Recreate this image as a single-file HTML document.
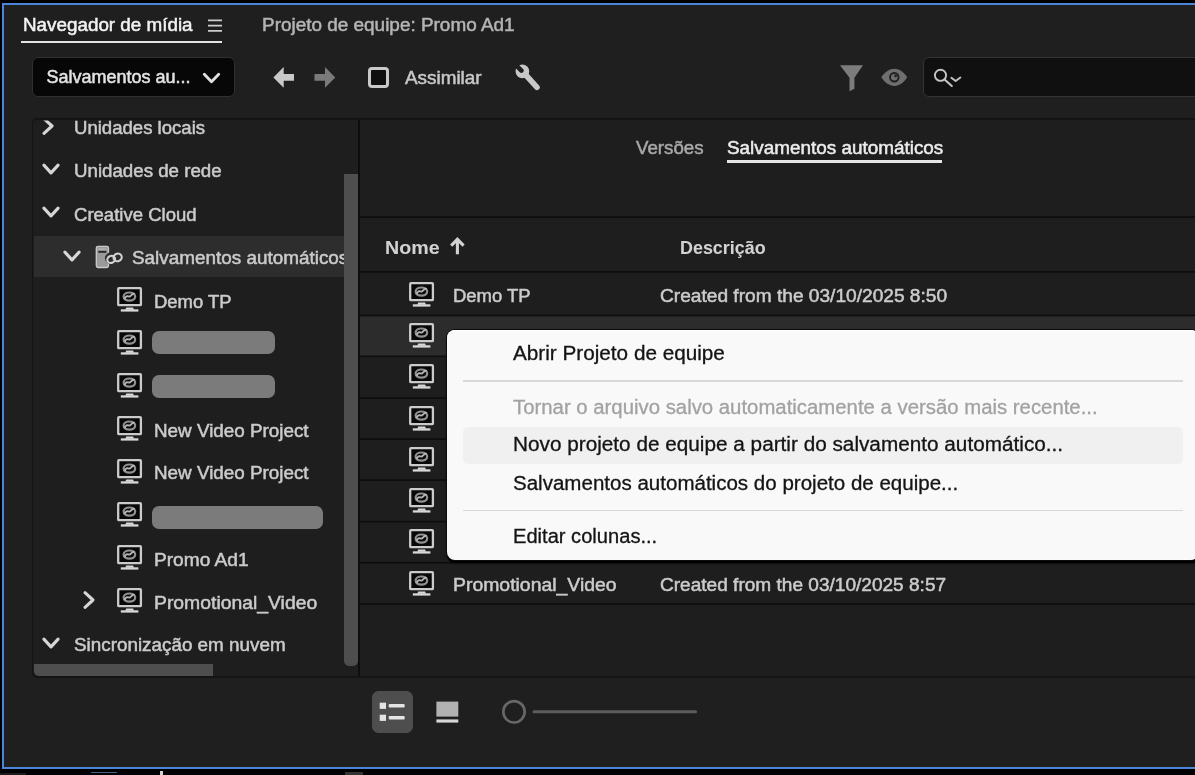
<!DOCTYPE html>
<html lang="pt-BR">
<head>
<meta charset="utf-8">
<title>Navegador de mídia</title>
<style>
html,body{margin:0;padding:0;background:#000;overflow:hidden;}
body{width:1195px;height:775px;position:relative;overflow:hidden;font-family:"Liberation Sans",sans-serif;}
.abs,.t,#root div,#root svg{position:absolute;}
.t{white-space:nowrap;line-height:1;transform-origin:0 0;-webkit-text-stroke:0.5px currentColor;}
#app{position:absolute;left:2px;top:3px;width:1210px;height:766px;box-sizing:border-box;border:2px solid #4a85d8;background:#1f1f1f;}
#root{position:absolute;left:0;top:0;width:1195px;height:775px;overflow:hidden;filter:blur(0.6px);}
.t.m{-webkit-text-stroke:0.3px currentColor;}
.t.b{-webkit-text-stroke:0.05px currentColor;}
.ln{background:#111;}
.sb{background:#4e4e4e;}
.red{background:#7b7b7b;border-radius:7px;}
.hl{background:#2d2d2d;}
</style>
</head>
<body>
<div id="app"></div>
<div id="root">

<!-- tab header -->
<div class="abs" style="left:20.5px;top:41px;width:201.5px;height:2px;background:#e4e4e4"></div>
<svg class="abs" style="left:206px;top:16.5px" width="18" height="16" viewBox="0 0 18 16"><g stroke="#cdcdcd" stroke-width="1.8"><path d="M2 3.4h14M2 8.6h14M2 13.8h14"/></g></svg>

<!-- toolbar -->
<div class="abs" style="left:32px;top:57px;width:203.2px;height:40px;box-sizing:border-box;background:#070707;border:1px solid #303030;border-radius:6px"></div>
<svg class="abs" style="left:200px;top:68px" width="24" height="20" viewBox="0 0 24 20"><path d="M4.3 6.2l7.2 7.5 7.2-7.5" fill="none" stroke="#e2e2e2" stroke-width="2.8" stroke-linecap="round" stroke-linejoin="round"/></svg>
<svg class="abs" style="left:270px;top:62px" width="70" height="30" viewBox="270 62 70 30"><path d="M273.4 77.4L283.7 67v7h10.3v6.8H283.7v6.9z" fill="#c9c9c9"/><path d="M335.3 77.4L325 67v7h-10.5v6.8H325v6.9z" fill="#7a7a7a"/></svg>
<div class="abs" style="left:368px;top:67px;width:20.5px;height:20.5px;box-sizing:border-box;border:3px solid #c9c9c9;border-radius:4px;background:#101010"></div>
<svg class="abs" style="left:510px;top:60px" width="36" height="34" viewBox="510 60 36 34"><path d="M524 73L537 87.3" stroke="#c8c8c8" stroke-width="5.6" stroke-linecap="round"/><circle cx="522.4" cy="71.4" r="6.8" fill="#c8c8c8"/><path d="M521.4 70.6L513 62.2" stroke="#1f1f1f" stroke-width="4.6" stroke-linecap="round"/></svg>
<svg class="abs" style="left:836px;top:60px" width="76" height="36" viewBox="836 60 76 36"><path d="M840 65.2h23l-8.6 12.5v11l-4.9 2.6V77.7z" fill="#7c7c7c"/><path d="M881.4 77.3c3.5-5.6 8-8.6 12.9-8.6s9.4 3 12.9 8.6c-3.5 5.6-8 8.6-12.9 8.6s-9.4-3-12.9-8.6z" fill="#6f6f6f"/><circle cx="894.3" cy="77.3" r="5.2" fill="#1f1f1f"/><circle cx="894.3" cy="77.3" r="3.3" fill="#6f6f6f"/><circle cx="895.6" cy="75.9" r="1.4" fill="#1f1f1f"/></svg>
<div class="abs" style="left:923px;top:57px;width:300px;height:40px;box-sizing:border-box;background:#101010;border:1px solid #343434;border-radius:6px"></div>
<svg class="abs" style="left:930px;top:64px" width="36" height="28" viewBox="930 64 36 28"><circle cx="940.5" cy="75.3" r="5.6" fill="none" stroke="#c4c4c4" stroke-width="1.9"/><path d="M944.6 79.4l7.2 6.6" stroke="#c4c4c4" stroke-width="2.1" stroke-linecap="round"/><path d="M951.4 77.8l4.2 3.3 4.8-3.5" fill="none" stroke="#c4c4c4" stroke-width="1.9" stroke-linecap="round" stroke-linejoin="round"/></svg>

<!-- tree panel + right panel frames -->
<div class="abs" style="left:32px;top:118px;width:1300px;height:560px;box-sizing:border-box;border:solid #141414;border-width:2px 0 2px 1.5px;border-radius:5px 0 0 5px;background:#1e1e1e"></div>
<div class="abs hl" style="left:33.5px;top:235.5px;width:310.5px;height:41.5px"></div>

<!-- right panel lines -->
<div class="abs" style="left:727.2px;top:160px;width:214.7px;height:3.3px;background:#e6e6e6"></div>
<div class="abs hl" style="left:359.5px;top:316px;width:900px;height:41px;background:#2c2c2c"></div>
<div class="abs" style="left:359.5px;top:216px;width:900px;height:2px;background:linear-gradient(to bottom,rgba(12,12,12,0.71) 0.000%,rgba(12,12,12,0.71) 50.000%,rgba(12,12,12,0.90) 50.000%,rgba(12,12,12,0.90) 100.000%)"></div>
<div class="abs" style="left:359.5px;top:271px;width:900px;height:2px;background:linear-gradient(to bottom,rgba(12,12,12,0.90) 0.000%,rgba(12,12,12,0.90) 50.000%,rgba(12,12,12,0.71) 50.000%,rgba(12,12,12,0.71) 100.000%)"></div>
<div class="abs" style="left:359.5px;top:314px;width:900px;height:3px;background:linear-gradient(to bottom,rgba(12,12,12,0.33) 0.000%,rgba(12,12,12,0.33) 33.333%,rgba(12,12,12,0.95) 33.333%,rgba(12,12,12,0.95) 66.667%,rgba(12,12,12,0.33) 66.667%,rgba(12,12,12,0.33) 100.000%)"></div>
<div class="abs" style="left:359.5px;top:355px;width:900px;height:3px;background:linear-gradient(to bottom,rgba(12,12,12,0.52) 0.000%,rgba(12,12,12,0.52) 33.333%,rgba(12,12,12,0.95) 33.333%,rgba(12,12,12,0.95) 66.667%,rgba(12,12,12,0.14) 66.667%,rgba(12,12,12,0.14) 100.000%)"></div>
<div class="abs" style="left:359.5px;top:397px;width:900px;height:2px;background:linear-gradient(to bottom,rgba(12,12,12,0.71) 0.000%,rgba(12,12,12,0.71) 50.000%,rgba(12,12,12,0.90) 50.000%,rgba(12,12,12,0.90) 100.000%)"></div>
<div class="abs" style="left:359.5px;top:438px;width:900px;height:2px;background:linear-gradient(to bottom,rgba(12,12,12,0.71) 0.000%,rgba(12,12,12,0.71) 50.000%,rgba(12,12,12,0.90) 50.000%,rgba(12,12,12,0.90) 100.000%)"></div>
<div class="abs" style="left:359.5px;top:479px;width:900px;height:2px;background:linear-gradient(to bottom,rgba(12,12,12,0.71) 0.000%,rgba(12,12,12,0.71) 50.000%,rgba(12,12,12,0.90) 50.000%,rgba(12,12,12,0.90) 100.000%)"></div>
<div class="abs" style="left:359.5px;top:520px;width:900px;height:3px;background:linear-gradient(to bottom,rgba(12,12,12,0.24) 0.000%,rgba(12,12,12,0.24) 33.333%,rgba(12,12,12,0.95) 33.333%,rgba(12,12,12,0.95) 66.667%,rgba(12,12,12,0.43) 66.667%,rgba(12,12,12,0.43) 100.000%)"></div>
<div class="abs" style="left:359.5px;top:561px;width:900px;height:3px;background:linear-gradient(to bottom,rgba(12,12,12,0.14) 0.000%,rgba(12,12,12,0.14) 33.333%,rgba(12,12,12,0.95) 33.333%,rgba(12,12,12,0.95) 66.667%,rgba(12,12,12,0.52) 66.667%,rgba(12,12,12,0.52) 100.000%)"></div>
<div class="abs" style="left:359.5px;top:603px;width:900px;height:2px;background:linear-gradient(to bottom,rgba(12,12,12,0.81) 0.000%,rgba(12,12,12,0.81) 50.000%,rgba(12,12,12,0.81) 50.000%,rgba(12,12,12,0.81) 100.000%)"></div>
<svg class="abs" style="left:115.8px;top:286.0px" width="28" height="28" viewBox="0 0 28 28"><rect x="2.2" y="2.2" width="22.7" height="17" rx="0.8" fill="#080808" stroke="#cbcbcb" stroke-width="2.3"/><ellipse cx="13.4" cy="10.6" rx="5.8" ry="4.1" fill="none" stroke="#909090" stroke-width="2.2"/><path d="M8.6 13.2c1.3-4.6 3.6-2.6 4.8-2.6 1.3 0 3.4-4.2 5.2-2.4" fill="none" stroke="#b4b4b4" stroke-width="2"/><path d="M10.2 21.5h6.9l.9 2.2h-8.7z" fill="#d8d8d8"/><rect x="4.8" y="23.3" width="17.6" height="2.3" fill="#d8d8d8"/></svg>
<svg class="abs" style="left:115.8px;top:329.0px" width="28" height="28" viewBox="0 0 28 28"><rect x="2.2" y="2.2" width="22.7" height="17" rx="0.8" fill="#080808" stroke="#cbcbcb" stroke-width="2.3"/><ellipse cx="13.4" cy="10.6" rx="5.8" ry="4.1" fill="none" stroke="#909090" stroke-width="2.2"/><path d="M8.6 13.2c1.3-4.6 3.6-2.6 4.8-2.6 1.3 0 3.4-4.2 5.2-2.4" fill="none" stroke="#b4b4b4" stroke-width="2"/><path d="M10.2 21.5h6.9l.9 2.2h-8.7z" fill="#d8d8d8"/><rect x="4.8" y="23.3" width="17.6" height="2.3" fill="#d8d8d8"/></svg>
<svg class="abs" style="left:115.8px;top:372.0px" width="28" height="28" viewBox="0 0 28 28"><rect x="2.2" y="2.2" width="22.7" height="17" rx="0.8" fill="#080808" stroke="#cbcbcb" stroke-width="2.3"/><ellipse cx="13.4" cy="10.6" rx="5.8" ry="4.1" fill="none" stroke="#909090" stroke-width="2.2"/><path d="M8.6 13.2c1.3-4.6 3.6-2.6 4.8-2.6 1.3 0 3.4-4.2 5.2-2.4" fill="none" stroke="#b4b4b4" stroke-width="2"/><path d="M10.2 21.5h6.9l.9 2.2h-8.7z" fill="#d8d8d8"/><rect x="4.8" y="23.3" width="17.6" height="2.3" fill="#d8d8d8"/></svg>
<svg class="abs" style="left:115.8px;top:415.0px" width="28" height="28" viewBox="0 0 28 28"><rect x="2.2" y="2.2" width="22.7" height="17" rx="0.8" fill="#080808" stroke="#cbcbcb" stroke-width="2.3"/><ellipse cx="13.4" cy="10.6" rx="5.8" ry="4.1" fill="none" stroke="#909090" stroke-width="2.2"/><path d="M8.6 13.2c1.3-4.6 3.6-2.6 4.8-2.6 1.3 0 3.4-4.2 5.2-2.4" fill="none" stroke="#b4b4b4" stroke-width="2"/><path d="M10.2 21.5h6.9l.9 2.2h-8.7z" fill="#d8d8d8"/><rect x="4.8" y="23.3" width="17.6" height="2.3" fill="#d8d8d8"/></svg>
<svg class="abs" style="left:115.8px;top:458.0px" width="28" height="28" viewBox="0 0 28 28"><rect x="2.2" y="2.2" width="22.7" height="17" rx="0.8" fill="#080808" stroke="#cbcbcb" stroke-width="2.3"/><ellipse cx="13.4" cy="10.6" rx="5.8" ry="4.1" fill="none" stroke="#909090" stroke-width="2.2"/><path d="M8.6 13.2c1.3-4.6 3.6-2.6 4.8-2.6 1.3 0 3.4-4.2 5.2-2.4" fill="none" stroke="#b4b4b4" stroke-width="2"/><path d="M10.2 21.5h6.9l.9 2.2h-8.7z" fill="#d8d8d8"/><rect x="4.8" y="23.3" width="17.6" height="2.3" fill="#d8d8d8"/></svg>
<svg class="abs" style="left:115.8px;top:501.0px" width="28" height="28" viewBox="0 0 28 28"><rect x="2.2" y="2.2" width="22.7" height="17" rx="0.8" fill="#080808" stroke="#cbcbcb" stroke-width="2.3"/><ellipse cx="13.4" cy="10.6" rx="5.8" ry="4.1" fill="none" stroke="#909090" stroke-width="2.2"/><path d="M8.6 13.2c1.3-4.6 3.6-2.6 4.8-2.6 1.3 0 3.4-4.2 5.2-2.4" fill="none" stroke="#b4b4b4" stroke-width="2"/><path d="M10.2 21.5h6.9l.9 2.2h-8.7z" fill="#d8d8d8"/><rect x="4.8" y="23.3" width="17.6" height="2.3" fill="#d8d8d8"/></svg>
<svg class="abs" style="left:115.8px;top:544.0px" width="28" height="28" viewBox="0 0 28 28"><rect x="2.2" y="2.2" width="22.7" height="17" rx="0.8" fill="#080808" stroke="#cbcbcb" stroke-width="2.3"/><ellipse cx="13.4" cy="10.6" rx="5.8" ry="4.1" fill="none" stroke="#909090" stroke-width="2.2"/><path d="M8.6 13.2c1.3-4.6 3.6-2.6 4.8-2.6 1.3 0 3.4-4.2 5.2-2.4" fill="none" stroke="#b4b4b4" stroke-width="2"/><path d="M10.2 21.5h6.9l.9 2.2h-8.7z" fill="#d8d8d8"/><rect x="4.8" y="23.3" width="17.6" height="2.3" fill="#d8d8d8"/></svg>
<svg class="abs" style="left:115.8px;top:587.0px" width="28" height="28" viewBox="0 0 28 28"><rect x="2.2" y="2.2" width="22.7" height="17" rx="0.8" fill="#080808" stroke="#cbcbcb" stroke-width="2.3"/><ellipse cx="13.4" cy="10.6" rx="5.8" ry="4.1" fill="none" stroke="#909090" stroke-width="2.2"/><path d="M8.6 13.2c1.3-4.6 3.6-2.6 4.8-2.6 1.3 0 3.4-4.2 5.2-2.4" fill="none" stroke="#b4b4b4" stroke-width="2"/><path d="M10.2 21.5h6.9l.9 2.2h-8.7z" fill="#d8d8d8"/><rect x="4.8" y="23.3" width="17.6" height="2.3" fill="#d8d8d8"/></svg>
<svg class="abs" style="left:407.9px;top:280.8px" width="28" height="28" viewBox="0 0 28 28"><rect x="2.2" y="2.2" width="22.7" height="17" rx="0.8" fill="#080808" stroke="#cbcbcb" stroke-width="2.3"/><ellipse cx="13.4" cy="10.6" rx="5.8" ry="4.1" fill="none" stroke="#909090" stroke-width="2.2"/><path d="M8.6 13.2c1.3-4.6 3.6-2.6 4.8-2.6 1.3 0 3.4-4.2 5.2-2.4" fill="none" stroke="#b4b4b4" stroke-width="2"/><path d="M10.2 21.5h6.9l.9 2.2h-8.7z" fill="#d8d8d8"/><rect x="4.8" y="23.3" width="17.6" height="2.3" fill="#d8d8d8"/></svg>
<svg class="abs" style="left:407.9px;top:322.1px" width="28" height="28" viewBox="0 0 28 28"><rect x="2.2" y="2.2" width="22.7" height="17" rx="0.8" fill="#080808" stroke="#cbcbcb" stroke-width="2.3"/><ellipse cx="13.4" cy="10.6" rx="5.8" ry="4.1" fill="none" stroke="#909090" stroke-width="2.2"/><path d="M8.6 13.2c1.3-4.6 3.6-2.6 4.8-2.6 1.3 0 3.4-4.2 5.2-2.4" fill="none" stroke="#b4b4b4" stroke-width="2"/><path d="M10.2 21.5h6.9l.9 2.2h-8.7z" fill="#d8d8d8"/><rect x="4.8" y="23.3" width="17.6" height="2.3" fill="#d8d8d8"/></svg>
<svg class="abs" style="left:407.9px;top:363.3px" width="28" height="28" viewBox="0 0 28 28"><rect x="2.2" y="2.2" width="22.7" height="17" rx="0.8" fill="#080808" stroke="#cbcbcb" stroke-width="2.3"/><ellipse cx="13.4" cy="10.6" rx="5.8" ry="4.1" fill="none" stroke="#909090" stroke-width="2.2"/><path d="M8.6 13.2c1.3-4.6 3.6-2.6 4.8-2.6 1.3 0 3.4-4.2 5.2-2.4" fill="none" stroke="#b4b4b4" stroke-width="2"/><path d="M10.2 21.5h6.9l.9 2.2h-8.7z" fill="#d8d8d8"/><rect x="4.8" y="23.3" width="17.6" height="2.3" fill="#d8d8d8"/></svg>
<svg class="abs" style="left:407.9px;top:404.6px" width="28" height="28" viewBox="0 0 28 28"><rect x="2.2" y="2.2" width="22.7" height="17" rx="0.8" fill="#080808" stroke="#cbcbcb" stroke-width="2.3"/><ellipse cx="13.4" cy="10.6" rx="5.8" ry="4.1" fill="none" stroke="#909090" stroke-width="2.2"/><path d="M8.6 13.2c1.3-4.6 3.6-2.6 4.8-2.6 1.3 0 3.4-4.2 5.2-2.4" fill="none" stroke="#b4b4b4" stroke-width="2"/><path d="M10.2 21.5h6.9l.9 2.2h-8.7z" fill="#d8d8d8"/><rect x="4.8" y="23.3" width="17.6" height="2.3" fill="#d8d8d8"/></svg>
<svg class="abs" style="left:407.9px;top:445.8px" width="28" height="28" viewBox="0 0 28 28"><rect x="2.2" y="2.2" width="22.7" height="17" rx="0.8" fill="#080808" stroke="#cbcbcb" stroke-width="2.3"/><ellipse cx="13.4" cy="10.6" rx="5.8" ry="4.1" fill="none" stroke="#909090" stroke-width="2.2"/><path d="M8.6 13.2c1.3-4.6 3.6-2.6 4.8-2.6 1.3 0 3.4-4.2 5.2-2.4" fill="none" stroke="#b4b4b4" stroke-width="2"/><path d="M10.2 21.5h6.9l.9 2.2h-8.7z" fill="#d8d8d8"/><rect x="4.8" y="23.3" width="17.6" height="2.3" fill="#d8d8d8"/></svg>
<svg class="abs" style="left:407.9px;top:487.1px" width="28" height="28" viewBox="0 0 28 28"><rect x="2.2" y="2.2" width="22.7" height="17" rx="0.8" fill="#080808" stroke="#cbcbcb" stroke-width="2.3"/><ellipse cx="13.4" cy="10.6" rx="5.8" ry="4.1" fill="none" stroke="#909090" stroke-width="2.2"/><path d="M8.6 13.2c1.3-4.6 3.6-2.6 4.8-2.6 1.3 0 3.4-4.2 5.2-2.4" fill="none" stroke="#b4b4b4" stroke-width="2"/><path d="M10.2 21.5h6.9l.9 2.2h-8.7z" fill="#d8d8d8"/><rect x="4.8" y="23.3" width="17.6" height="2.3" fill="#d8d8d8"/></svg>
<svg class="abs" style="left:407.9px;top:528.3px" width="28" height="28" viewBox="0 0 28 28"><rect x="2.2" y="2.2" width="22.7" height="17" rx="0.8" fill="#080808" stroke="#cbcbcb" stroke-width="2.3"/><ellipse cx="13.4" cy="10.6" rx="5.8" ry="4.1" fill="none" stroke="#909090" stroke-width="2.2"/><path d="M8.6 13.2c1.3-4.6 3.6-2.6 4.8-2.6 1.3 0 3.4-4.2 5.2-2.4" fill="none" stroke="#b4b4b4" stroke-width="2"/><path d="M10.2 21.5h6.9l.9 2.2h-8.7z" fill="#d8d8d8"/><rect x="4.8" y="23.3" width="17.6" height="2.3" fill="#d8d8d8"/></svg>
<svg class="abs" style="left:407.9px;top:569.5px" width="28" height="28" viewBox="0 0 28 28"><rect x="2.2" y="2.2" width="22.7" height="17" rx="0.8" fill="#080808" stroke="#cbcbcb" stroke-width="2.3"/><ellipse cx="13.4" cy="10.6" rx="5.8" ry="4.1" fill="none" stroke="#909090" stroke-width="2.2"/><path d="M8.6 13.2c1.3-4.6 3.6-2.6 4.8-2.6 1.3 0 3.4-4.2 5.2-2.4" fill="none" stroke="#b4b4b4" stroke-width="2"/><path d="M10.2 21.5h6.9l.9 2.2h-8.7z" fill="#d8d8d8"/><rect x="4.8" y="23.3" width="17.6" height="2.3" fill="#d8d8d8"/></svg>
<svg class="abs" style="left:94px;top:244px" width="32" height="26" viewBox="94 244 32 26"><rect x="96.3" y="246.3" width="12.2" height="21.2" rx="1.8" fill="#9a9a9a" stroke="#cacaca" stroke-width="1.3"/><rect x="98.3" y="250.9" width="8" height="1.9" fill="#2a2a2a"/><rect x="98.3" y="248.6" width="8" height="1" fill="#c0c0c0"/><ellipse cx="114.4" cy="258.2" rx="9.4" ry="7" fill="#2d2d2d"/><ellipse cx="111.2" cy="259.4" rx="4" ry="3.4" fill="none" stroke="#d2d2d2" stroke-width="2.1" transform="rotate(-25 111.2 259.4)"/><ellipse cx="117.6" cy="257.4" rx="4.2" ry="3.8" fill="none" stroke="#d2d2d2" stroke-width="2.1" transform="rotate(-25 117.6 257.4)"/></svg>
<div class="abs red" style="left:152.3px;top:331.0px;width:122.9px;height:23.2px"></div>
<div class="abs red" style="left:152.3px;top:374.6px;width:122.9px;height:23.2px"></div>
<div class="abs red" style="left:151.8px;top:505.6px;width:171.2px;height:23.4px"></div>
<svg class="abs" style="clip-path:inset(7.8px 0 0 0);left:35.2px;top:112.7px" width="26" height="26" viewBox="35.2 112.7 26 26"><path d="M44.2 118.4L52.2 125.7L44.2 133.0" fill="none" stroke="#d6d6d6" stroke-width="3.1" stroke-linecap="round" stroke-linejoin="round"/></svg>
<svg class="abs" style="left:38.4px;top:155.7px" width="26" height="26" viewBox="38.4 155.7 26 26"><path d="M44.3 164.8L51.4 172.6L58.5 164.8" fill="none" stroke="#d6d6d6" stroke-width="3.1" stroke-linecap="round" stroke-linejoin="round"/></svg>
<svg class="abs" style="left:38.4px;top:199.3px" width="26" height="26" viewBox="38.4 199.3 26 26"><path d="M44.3 208.4L51.4 216.2L58.5 208.4" fill="none" stroke="#d6d6d6" stroke-width="3.1" stroke-linecap="round" stroke-linejoin="round"/></svg>
<svg class="abs" style="left:59.0px;top:243.1px" width="26" height="26" viewBox="59.0 243.1 26 26"><path d="M64.9 252.2L72.0 260.0L79.1 252.2" fill="none" stroke="#d6d6d6" stroke-width="3.1" stroke-linecap="round" stroke-linejoin="round"/></svg>
<svg class="abs" style="left:76.4px;top:587.1px" width="26" height="26" viewBox="76.4 587.1 26 26"><path d="M85.4 592.8L93.4 600.1L85.4 607.4" fill="none" stroke="#d6d6d6" stroke-width="3.1" stroke-linecap="round" stroke-linejoin="round"/></svg>
<svg class="abs" style="left:38.4px;top:630.4px" width="26" height="26" viewBox="38.4 630.4 26 26"><path d="M44.3 639.5L51.4 647.3L58.5 639.5" fill="none" stroke="#d6d6d6" stroke-width="3.1" stroke-linecap="round" stroke-linejoin="round"/></svg>
<svg class="abs" style="left:448px;top:236px" width="20" height="20" viewBox="448 236 20 20"><path d="M457.4 254.3V240M451.2 245.6l6.2-6.3 6.2 6.3" fill="none" stroke="#d2d2d2" stroke-width="3.1" stroke-linejoin="miter"/></svg>

<span class="t" style="left:23.0px;top:16.0px;font-size:18px;color:#f2f2f2;font-weight:400;transform:scaleX(1.0462)">Navegador de mídia</span>
<span class="t" style="left:262.0px;top:16.0px;font-size:18px;color:#b4b4b4;font-weight:400;transform:scaleX(1.0517)">Projeto de equipe: Promo Ad1</span>
<span class="t" style="left:46.5px;top:68.0px;font-size:18px;color:#e4e4e4;font-weight:400;transform:scaleX(1.0000)">Salvamentos au...</span>
<span class="t" style="left:404.7px;top:69.0px;font-size:18px;color:#c8c8c8;font-weight:400;transform:scaleX(1.0491)">Assimilar</span>
<span class="t" style="left:636.0px;top:139.0px;font-size:18px;color:#a8a8a8;font-weight:400;transform:scaleX(1.0393)">Versões</span>
<span class="t" style="left:727.2px;top:139.0px;font-size:18px;color:#ececec;font-weight:400;transform:scaleX(1.0494)">Salvamentos automáticos</span>
<span class="t b" style="left:385.0px;top:239.0px;font-size:18px;color:#d2d2d2;font-weight:700;transform:scaleX(1.0917)">Nome</span>
<span class="t b" style="left:679.5px;top:239.0px;font-size:18px;color:#d2d2d2;font-weight:700;transform:scaleX(0.9946)">Descrição</span>
<span class="t" style="left:74.0px;top:119.0px;font-size:18px;color:#cbcbcb;font-weight:400;transform:scaleX(1.0316)">Unidades locais</span>
<span class="t" style="left:74.0px;top:162.0px;font-size:18px;color:#cbcbcb;font-weight:400;transform:scaleX(1.0386)">Unidades de rede</span>
<span class="t" style="left:74.0px;top:206.0px;font-size:18px;color:#cbcbcb;font-weight:400;transform:scaleX(1.0297)">Creative Cloud</span>
<span class="t" style="left:132.4px;top:249.0px;font-size:18px;color:#cbcbcb;font-weight:400;transform:scaleX(1.0494)">Salvamentos automáticos</span>
<span class="t" style="left:154.3px;top:293.0px;font-size:18px;color:#cbcbcb;font-weight:400;transform:scaleX(1.0251)">Demo TP</span>
<span class="t" style="left:154.3px;top:422.0px;font-size:18px;color:#cbcbcb;font-weight:400;transform:scaleX(1.0464)">New Video Project</span>
<span class="t" style="left:154.3px;top:464.0px;font-size:18px;color:#cbcbcb;font-weight:400;transform:scaleX(1.0464)">New Video Project</span>
<span class="t" style="left:154.3px;top:551.0px;font-size:18px;color:#cbcbcb;font-weight:400;transform:scaleX(1.0622)">Promo Ad1</span>
<span class="t" style="left:154.3px;top:594.0px;font-size:18px;color:#cbcbcb;font-weight:400;transform:scaleX(1.0752)">Promotional_Video</span>
<span class="t" style="left:73.7px;top:636.0px;font-size:18px;color:#cbcbcb;font-weight:400;transform:scaleX(1.0470)">Sincronização em nuvem</span>
<span class="t" style="left:453.0px;top:287.0px;font-size:18px;color:#cbcbcb;font-weight:400;transform:scaleX(1.0251)">Demo TP</span>
<span class="t" style="left:659.8px;top:287.0px;font-size:18px;color:#cbcbcb;font-weight:400;transform:scaleX(1.0626)">Created from the 03/10/2025 8:50</span>
<span class="t" style="left:659.8px;top:328.0px;font-size:18px;color:#cbcbcb;font-weight:400;transform:scaleX(1.0626)">Created from the 03/10/2025 8:51</span>
<span class="t" style="left:453.0px;top:576.0px;font-size:18px;color:#cbcbcb;font-weight:400;transform:scaleX(1.0779)">Promotional_Video</span>
<span class="t" style="left:659.8px;top:576.0px;font-size:18px;color:#cbcbcb;font-weight:400;transform:scaleX(1.0589)">Created from the 03/10/2025 8:57</span>
<div class="abs" style="left:343.7px;top:120.5px;width:14px;height:53px;background:#1e1e1e"></div>
<div class="abs sb" style="left:343.7px;top:173.5px;width:14px;height:492px;border-radius:0 0 5px 5px"></div>
<div class="abs sb" style="left:33.5px;top:664.3px;width:179.5px;height:11.5px;border-radius:0 0 0 5px"></div>
<div class="abs" style="left:357.8px;top:120px;width:1.8px;height:556px;background:#0d0d0d"></div>

<!-- bottom toolbar -->
<div class="abs" style="left:371.6px;top:690.7px;width:41.2px;height:42.3px;background:#4e4e4e;border-radius:6.5px"></div>
<svg class="abs" style="left:376px;top:698px" width="32" height="28" viewBox="376 698 32 28"><g fill="#e4e4e4"><rect x="379.7" y="702.7" width="6.3" height="6.2"/><rect x="379.7" y="714.7" width="6.3" height="6.2"/><rect x="388.7" y="704.1" width="16" height="3.5" rx="1"/><rect x="388.7" y="716.1" width="16" height="3.5" rx="1"/></g></svg>
<svg class="abs" style="left:432px;top:698px" width="32" height="28" viewBox="432 698 32 28"><rect x="436.4" y="701.6" width="21.9" height="15" fill="#b2b2b2"/><rect x="436.4" y="719.4" width="21.9" height="3.2" fill="#d6d6d6"/></svg>
<svg class="abs" style="left:498px;top:696px" width="204" height="32" viewBox="498 696 204 32"><path d="M534 711.8H695.6" stroke="#5c5c5c" stroke-width="3" stroke-linecap="round"/><circle cx="514" cy="711.8" r="10.7" fill="#1f1f1f" stroke="#686868" stroke-width="2.6"/></svg>

<!-- bottom strip details -->
<div class="abs" style="left:0;top:773px;width:26px;height:2px;background:#1b1b1b"></div>
<div class="abs" style="left:91px;top:771.5px;width:26px;height:1.5px;background:#46607f"></div>
<div class="abs" style="left:160px;top:771px;width:2.5px;height:4px;background:#d0d0d0"></div>
<div class="abs" style="left:345px;top:772px;width:18px;height:3px;background:#333"></div>

<!-- context menu -->
<div id="menu" class="abs" style="left:447px;top:329.5px;width:751.5px;height:230.8px;background:#f9f9f9;border-radius:8px;box-shadow:0 0 0 1px #0c0c0c, 0 3px 0 0 #000, 0 3px 3px rgba(0,0,0,.5), inset 0 1.5px 0 #ffffff">
  <div style="left:15.5px;top:50.5px;width:720.5px;height:1.5px;background:#d8d8d8"></div>
  <div style="left:15.5px;top:97px;width:720.5px;height:37px;background:#f0f0f0;border-radius:5px"></div>
  <div style="left:15.5px;top:180px;width:720.5px;height:1.5px;background:#d8d8d8"></div>
</div>
<span class="t m" style="left:513.1px;top:344.0px;font-size:19.5px;color:#141414;font-weight:400;transform:scaleX(1.0623)">Abrir Projeto de equipe</span>
<span class="t m" style="left:513.1px;top:398.0px;font-size:19.5px;color:#a2a2a2;font-weight:400;transform:scaleX(1.0433)">Tornar o arquivo salvo automaticamente a versão mais recente...</span>
<span class="t m" style="left:513.1px;top:435.0px;font-size:19.5px;color:#141414;font-weight:400;transform:scaleX(1.0639)">Novo projeto de equipe a partir do salvamento automático...</span>
<span class="t m" style="left:513.1px;top:474.0px;font-size:19.5px;color:#141414;font-weight:400;transform:scaleX(1.0531)">Salvamentos automáticos do projeto de equipe...</span>
<span class="t m" style="left:513.1px;top:527.0px;font-size:19.5px;color:#141414;font-weight:400;transform:scaleX(1.0313)">Editar colunas...</span>

</div>
</body>
</html>
